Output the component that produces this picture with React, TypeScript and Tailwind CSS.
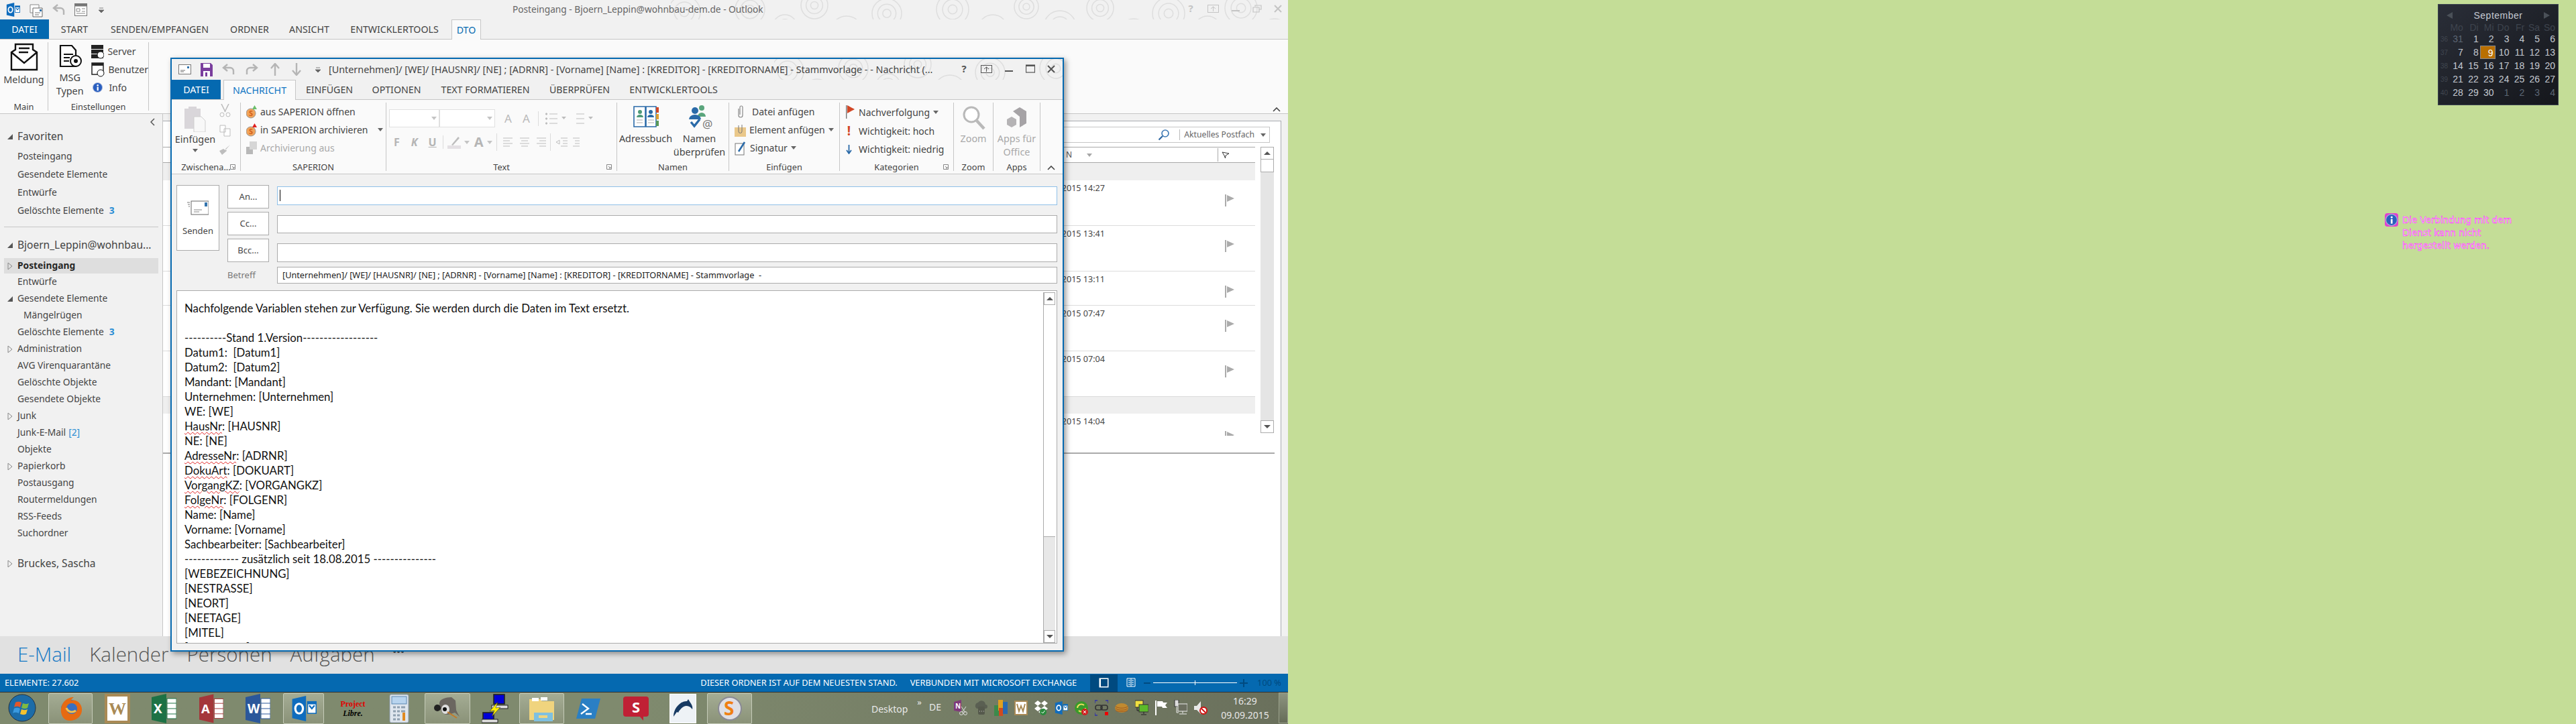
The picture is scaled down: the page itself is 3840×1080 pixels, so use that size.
import React from "react";

const seg = "font-['Noto_Sans','Open_Sans',sans-serif]";

const swirls: [number, number, number][] = [
  [20,18,24],[64,50,20],[118,14,22],[170,40,18],[214,8,20],[262,48,24],[322,20,22],[372,52,18],[420,14,24],[480,44,22],[530,10,18],[580,40,24],[640,12,20],[690,50,22],[742,20,24],[800,44,20],[850,12,24],[900,50,22],
];

function Swirls({ w, h }: { w: number; h: number }) {
  return (
    <svg width={w} height={h} viewBox={`0 0 ${w} ${h}`} className="block" fill="none" stroke="#dedede" strokeWidth="1.5">
      {swirls.filter(([x]) => x < w + 30).map(([x, y, r], i) => (
        <g key={i}>
          <circle cx={x} cy={y} r={r} />
          <circle cx={x} cy={y} r={r * 0.62} />
          <circle cx={x} cy={y} r={r * 0.28} />
        </g>
      ))}
    </svg>
  );
}

function OutlookIcon({ s = 22 }: { s?: number }) {
  return (
    <svg width={s} height={s} viewBox="0 0 24 24" className="shrink-0">
      <path d="M1 3 14 0v24L1 21z" fill="#0f6cbd" />
      <ellipse cx="7.5" cy="12" rx="3.6" ry="4.6" fill="none" stroke="#fff" strokeWidth="2" />
      <rect x="15" y="5" width="9" height="12" fill="#0f6cbd" />
      <rect x="16" y="8" width="7" height="8" fill="#fff" />
      <path d="m17 9 2.5 3L22 9" stroke="#0f6cbd" fill="none" strokeWidth="1.4" />
    </svg>
  );
}

function Flag({ c = "#ababab" }: { c?: string }) {
  return (
    <svg width="14" height="18" viewBox="0 0 14 18" className="shrink-0">
      <rect x="0" y="0" width="2" height="18" fill={c} />
      <path d="M3 1 14 6 3 11z" fill={c} />
    </svg>
  );
}

function Tri({ open }: { open?: boolean }) {
  return open ? (
    <svg width="10" height="10" viewBox="0 0 10 10" className="shrink-0"><path d="M9 1v8H1z" fill="#555" /></svg>
  ) : (
    <svg width="10" height="12" viewBox="0 0 10 12" className="shrink-0"><path d="M2 1l6 5-6 5z" fill="none" stroke="#888" /></svg>
  );
}

function Caret({ c = "#666" }: { c?: string }) {
  return <svg width="8" height="5" viewBox="0 0 8 5" className="shrink-0"><path d="M0 0h8L4 5z" fill={c} /></svg>;
}

function NavRow({ label, h = 25, indent = 26, tri, open, bold, active, badge, linkBadge, big }: { label: string; h?: number; indent?: number; tri?: boolean; open?: boolean; bold?: boolean; active?: boolean; badge?: string; linkBadge?: string; big?: boolean }) {
  return (
    <div className={`flex items-center mx-1.5 pr-1 ${active ? "bg-[#dedede]" : ""}`} style={{ height: h, paddingLeft: indent - 6 }}>
      {tri && <span className="-ml-4 w-4 flex items-center"><Tri open={open} /></span>}
      <span className={`whitespace-nowrap text-[#444] ${big ? "text-[15.5px]" : "text-[13.8px]"} ${bold ? "font-bold text-[#262626]" : ""}`}>{label}</span>
      {badge && <span className="ml-2 text-[13.8px] font-bold text-[#2a8dd4]">{badge}</span>}
      {linkBadge && <span className="ml-1 text-[13.8px] text-[#2a8dd4]">{linkBadge}</span>}
    </div>
  );
}

function Sidebar() {
  return (
    <div className={`w-[243px] shrink-0 bg-[#f1f1f1] border-r border-[#c6c6c6] pt-[21px] ${seg} relative`}>
      <svg width="8" height="12" viewBox="0 0 8 12" className="absolute left-[224px] top-[6px]"><path d="M6 1 1 6l5 5" fill="none" stroke="#555" strokeWidth="1.5" /></svg>
      <NavRow label="Favoriten" tri open big h={26} />
      <div className="h-[3px]" />
      <NavRow label="Posteingang" h={27} />
      <NavRow label="Gesendete Elemente" h={27} />
      <NavRow label="Entwürfe" h={27} />
      <NavRow label="Gelöschte Elemente" badge="3" h={27} />
      <div className="mx-1.5 mt-[10px] h-px bg-[#c6c6c6]" />
      <div className="h-[14px]" />
      <NavRow label="Bjoern_Leppin@wohnbau..." tri open big h={26} />
      <div className="h-[6px]" />
      <NavRow label="Posteingang" tri bold active h={23} />
      <NavRow label="Entwürfe" />
      <NavRow label="Gesendete Elemente" tri open />
      <NavRow label="Mängelrügen" indent={35} h={24} />
      <NavRow label="Gelöschte Elemente" badge="3" h={26} />
      <NavRow label="Administration" tri />
      <NavRow label="AVG Virenquarantäne" />
      <NavRow label="Gelöschte Objekte" />
      <NavRow label="Gesendete Objekte" />
      <NavRow label="Junk" tri />
      <NavRow label="Junk-E-Mail" linkBadge="[2]" />
      <NavRow label="Objekte" />
      <NavRow label="Papierkorb" tri />
      <NavRow label="Postausgang" />
      <NavRow label="Routermeldungen" />
      <NavRow label="RSS-Feeds" />
      <NavRow label="Suchordner" />
      <div className="h-[20px]" />
      <NavRow label="Bruckes, Sascha" tri big h={26} />
    </div>
  );
}

function MailRow({ h, date }: { h: number; date: string }) {
  return (
    <div className="relative border-b border-[#dcdcdc] flex justify-between bg-white" style={{ height: h }}>
      <div className="pl-[1243px] pt-[3px] text-[12.6px] text-[#444] w-[1404px] text-right whitespace-nowrap">{date}</div>
      <div className="pt-[21px] pr-[31px]"><Flag /></div>
    </div>
  );
}

function MailPane() {
  return (
    <div className={`flex-1 min-w-0 bg-[#f1f1f1] pt-[10px] pb-0 ${seg}`}>
      <div className="ml-0 mr-[10px] h-full bg-white border-t border-r border-[#a8abb0] relative pr-[9px] pt-[8px]">
        <div className="flex justify-end h-[24px] pr-[7px]">
          <div className="w-[320px] border border-[#c6c6c6] flex items-center text-[12.2px] text-[#666] pl-[10px] pr-[5px]">
            <div className="flex-1" />
            <svg width="18" height="18" viewBox="0 0 18 18" className="mr-[14px]"><circle cx="11" cy="7" r="5" fill="none" stroke="#3c78b4" strokeWidth="1.6" /><path d="M7 11 1.5 16.5" stroke="#2a64a0" strokeWidth="2.2" /></svg>
            <div className="w-px h-[16px] bg-[#bbb] mr-[6px]" />
            <span className="whitespace-nowrap">Aktuelles Postfach</span>
            <span className="ml-[9px]"><Caret /></span>
          </div>
        </div>
        <div className="flex mt-[6px] h-[444px] pr-[1px]">
          <div className="flex-1 min-w-0">
            <div className="h-[24px] border-t border-b border-[#a8a8a8] relative flex items-center bg-white">
              <span className="ml-[1346px] text-[12px] text-[#555]">N</span>
              <span className="ml-[22px]"><Caret c="#a6a6a6" /></span>
              <div className="flex-1" />
              <div className="w-px h-[20px] bg-[#aaa] mr-[5px]" />
              <svg width="12" height="11" viewBox="0 0 12 11" className="mr-[38px]"><path d="M1 1 11 3 6 6l-.5 4L4 6z" fill="#fff" stroke="#333" /></svg>
            </div>
            <div className="h-[26px] bg-[#efefef]" />
            <MailRow h={68} date="08.09.2015 14:27" />
            <MailRow h={68} date="08.09.2015 13:41" />
            <MailRow h={51} date="08.09.2015 13:11" />
            <MailRow h={68} date="08.09.2015 07:47" />
            <MailRow h={68} date="08.09.2015 07:04" />
            <div className="h-[25px] bg-[#efefef]" />
            <div className="relative h-[33px] bg-white overflow-hidden flex justify-between">
              <div className="pl-[1243px] pt-[3px] text-[12.6px] text-[#444] w-[1404px] text-right whitespace-nowrap">04.09.2015 14:04</div>
              <div className="pt-[26px] pr-[31px]"><Flag /></div>
            </div>
          </div>
          <div className="w-[20px] ml-[8px] shrink-0 flex flex-col bg-[#e5e5e5] h-[427px]">
            <ScrollBtn />
            <div className="h-[20px] bg-white border border-[#ababab] -mt-px" />
            <div className="flex-1" />
            <ScrollBtn down />
          </div>
        </div>
        <div className="h-[12px]" />
        <div className="border-t-2 border-[#aaaaaa]" />
      </div>
    </div>
  );
}

function ScrollBtn({ down }: { down?: boolean }) {
  return (
    <div className="h-[19px] bg-white border border-[#ababab] flex items-center justify-center shrink-0">
      <svg width="10" height="5" viewBox="0 0 10 5"><path d={down ? "M0 0h10L5 5z" : "M0 5h10L5 0z"} fill="#555" /></svg>
    </div>
  );
}

function MainRibbon() {
  return (
    <div className={`h-[111px] bg-[#fafafa] border-b border-[#c6c6c6] flex text-[#444] ${seg} relative`}>
      <div className="w-[72px] border-r border-[#c6c6c6] my-[4px] flex flex-col items-center">
        <svg width="42" height="42" viewBox="0 0 42 42" className="mt-[1px]"><path d="M2 14 8 10V2h26v8l6 4v26H2z" fill="#fff" stroke="#111" strokeWidth="2.4" /><path d="m2 14 19 16 19-16" fill="none" stroke="#111" strokeWidth="2.4" /><path d="M13 8h16M13 14h14" stroke="#111" strokeWidth="2.4" /></svg>
        <div className="text-[14.4px] mt-[3px] leading-[20px]">Meldung</div>
        <div className="flex-1" />
        <div className="text-[12.8px] leading-[18px] relative top-[3px]">Main</div>
      </div>
      <div className="w-[150px] border-r border-[#c6c6c6] my-[4px] flex flex-col">
        <div className="flex flex-1">
          <div className="w-[72px] flex flex-col items-center">
            <svg width="36" height="36" viewBox="0 0 36 36" className="mt-[3px]"><path d="M4 2h17l6 7v24H4z" fill="#fff" stroke="#111" strokeWidth="2.2" /><path d="M9 15h14M9 20h9M9 25h8" stroke="#111" strokeWidth="2" /><circle cx="27" cy="25" r="8" fill="#fff" stroke="#111" strokeWidth="2" /><circle cx="27" cy="25" r="3" fill="#111" /></svg>
            <div className="text-[14.4px] text-center leading-[20px] mt-[4px]">MSG<br />Typen</div>
          </div>
          <div className="flex flex-col text-[14px]">
            <div className="flex items-center h-[27px] gap-[5px]">
              <svg width="19" height="22" viewBox="0 0 19 22"><rect x="0" y="1" width="18" height="6" fill="#222" /><rect x="0" y="8" width="18" height="6" fill="#222" /><rect x="0" y="15" width="18" height="6" fill="#222" /><circle cx="14" cy="16" r="5" fill="#fff" stroke="#111" /></svg>
              <span>Server</span>
            </div>
            <div className="flex items-center h-[27px] gap-[5px]">
              <svg width="20" height="22" viewBox="0 0 20 22"><rect x="1" y="1" width="17" height="17" fill="#fff" stroke="#222" strokeWidth="1.5" /><rect x="1" y="1" width="17" height="4" fill="#222" /><circle cx="14" cy="16" r="5" fill="#fff" stroke="#111" /></svg>
              <span>Benutzer</span>
            </div>
            <div className="flex items-center h-[27px] gap-[9px] pl-[2px]">
              <InfoDot s={15} />
              <span>Info</span>
            </div>
          </div>
        </div>
        <div className="text-[12.8px] leading-[18px] text-center relative top-[3px]">Einstellungen</div>
      </div>
      <div className="flex-1" />
      <svg width="12" height="7" viewBox="0 0 12 7" className="absolute right-[11px] top-[101px]"><path d="M1 6l5-5 5 5" fill="none" stroke="#444" strokeWidth="1.6" /></svg>
    </div>
  );
}

function InfoDot({ s = 16 }: { s?: number }) {
  return (
    <svg width={s} height={s} viewBox="0 0 16 16" className="shrink-0">
      <circle cx="8" cy="8" r="7.5" fill="#2a5fc0" stroke="#aab8d8" />
      <rect x="7" y="7" width="2.4" height="6" fill="#fff" />
      <circle cx="8.2" cy="4.5" r="1.4" fill="#fff" />
    </svg>
  );
}

function Tab({ w, children, className = "" }: { w: number; children: React.ReactNode; className?: string }) {
  return <div className={`flex items-center justify-center whitespace-nowrap shrink-0 ${className}`} style={{ width: w }}>{children}</div>;
}

function WinButtons({ dim }: { dim?: boolean }) {
  const c = dim ? "#c4c4c4" : "#555";
  return (
    <div className="flex items-center gap-[17px]" style={{ color: c }}>
      <span className="text-[15px] font-bold leading-none w-[16px] text-center">?</span>
      <svg width="17" height="12" viewBox="0 0 17 12"><rect x=".5" y=".5" width="16" height="11" fill="none" stroke={c} /><path d="M8.5 10V3M5 6l3.5-3L12 6" stroke={c} fill="none" /></svg>
      <svg width="16" height="12" viewBox="0 0 16 12"><rect x="2" y="8" width="12" height="2" fill={c} /></svg>
      {dim ? (
        <svg width="14" height="12" viewBox="0 0 14 12"><path d="M4 3V1h9v6h-3M1 4h9v7H1z" fill="none" stroke={c} strokeWidth="1.2" /></svg>
      ) : (
        <svg width="14" height="13" viewBox="0 0 14 13"><rect x=".5" y="1" width="13" height="11" fill="none" stroke={c} strokeWidth="1.2" /><rect x=".5" y="1" width="13" height="2" fill={c} /></svg>
      )}
      <svg width="14" height="14" viewBox="0 0 14 14"><path d="M2 2l10 10M12 2 2 12" stroke={c} strokeWidth="2" /></svg>
    </div>
  );
}

function MainWindow() {
  return (
    <div className="w-[1920px] shrink-0 h-[1032px] flex flex-col bg-[#f1f1f1]">
      <div className={`h-[29px] relative overflow-hidden flex items-center ${seg}`}>
        <div className="pl-[9px] flex items-center gap-[14px] shrink-0">
          <OutlookIcon s={21} />
          <svg width="20" height="22" viewBox="0 0 20 22"><path d="M1 3h13v12H1z" fill="#fff" stroke="#888" /><path d="M5 8h14v13H5z" fill="#fff" stroke="#666" /><path d="M8 15h8M8 18h6" stroke="#777" /><rect x="15" y="10" width="3" height="3" fill="#3374ad" /></svg>
          <svg width="19" height="17" viewBox="0 0 19 17"><path d="M8 1 2 6l6 5M3 6h9a5 5 0 0 1 5 5v5" fill="none" stroke="#b5b5b5" strokeWidth="2.4" /></svg>
          <svg width="19" height="19" viewBox="0 0 19 19"><rect x=".5" y=".5" width="18" height="18" fill="#fff" stroke="#777" /><rect x=".5" y=".5" width="18" height="4" fill="#777" /><path d="M3 8h5v4H3zM11 8h5M11 12h5M3 15h13" stroke="#888" fill="none" /></svg>
          <svg width="8" height="8" viewBox="0 0 8 8" className="ml-[3px]"><path d="M1 1h6M0 4h8L4 8z" stroke="#666" fill="#666" strokeWidth=".8" /></svg>
        </div>
        <div className="absolute left-[764px] top-[4px] text-[13.7px] text-[#666] whitespace-nowrap z-10">Posteingang - Bjoern_Leppin@wohnbau-dem.de - Outlook</div>
        <div className="absolute right-0 top-0 w-[920px] h-[59px] overflow-hidden"><Swirls w={920} h={59} /></div>
        <div className="absolute right-[8px] top-[5px]"><WinButtons dim /></div>
      </div>
      <div className={`h-[30px] border-b border-[#c6c6c6] flex items-stretch text-[14.2px] text-[#444] ${seg} relative z-10`}>
        <Tab w={73} className="bg-[#0569b0] text-white">DATEI</Tab>
        <Tab w={76}>START</Tab>
        <Tab w={178}>SENDEN/EMPFANGEN</Tab>
        <Tab w={90}>ORDNER</Tab>
        <Tab w={88}>ANSICHT</Tab>
        <Tab w={166}>ENTWICKLERTOOLS</Tab>
        <Tab w={44} className="ml-[2px] bg-[#fafafa] border border-b-0 border-[#c6c6c6] text-[#0569b0] h-[30px]">DTO</Tab>
      </div>
      <MainRibbon />
      <div className="flex flex-1 min-h-0 overflow-hidden">
        <Sidebar />
        <MailPane />
      </div>
      <div className="h-[56px] bg-[#e1e1e1] flex items-center pl-[26px] pb-[2px] text-[#555] text-[29.5px] font-light font-['Open_Sans',sans-serif] shrink-0 leading-none gap-[27px]">
        <span className="text-[#1377c4]">E-Mail</span>
        <span>Kalender</span>
        <span>Personen</span>
        <span>Aufgaben</span>
        <span className="text-[#555] text-[13px] font-bold tracking-[1px] -mt-[8px]">•••</span>
      </div>
      <div className={`h-[27px] bg-[#0569b0] flex items-center text-white text-[12.8px] shrink-0 ${seg}`}>
        <span className="ml-[7px]">ELEMENTE: 27.602</span>
        <div className="flex-1" />
        <span>DIESER ORDNER IST AUF DEM NEUESTEN STAND.</span>
        <span className="ml-[19px]">VERBUNDEN MIT MICROSOFT EXCHANGE</span>
        <div className="ml-[20px] w-[41px] h-[26px] bg-[#004a80] flex items-center justify-center">
          <svg width="15" height="15" viewBox="0 0 15 15"><rect x=".5" y=".5" width="14" height="14" fill="#fff" /><rect x="3" y="2" width="10" height="11" fill="#004a80" /></svg>
        </div>
        <svg width="14" height="15" viewBox="0 0 14 15" className="ml-[13px]"><path d="M1 1h12v12H1zM7 1v12M3 4h3M3 7h3M3 10h3M8 4h3M8 7h3M8 10h3" stroke="#fff" fill="none" /></svg>
        <span className="ml-[12px] w-[10px] h-[2px] bg-[#004a80]" />
        <div className="ml-[4px] w-[125px] h-px bg-white flex justify-center items-center"><span className="w-px h-[7px] bg-white" /></div>
        <svg width="12" height="12" viewBox="0 0 12 12" className="ml-[4px]"><path d="M0 6h12M6 0v12" stroke="#004a80" strokeWidth="2" /></svg>
        <span className="ml-[14px] mr-[10px] text-[#004a80]">100 %</span>
      </div>
    </div>
  );
}

function ComposeField({ focus, children }: { focus?: boolean; children?: React.ReactNode }) {
  return (
    <div className={`flex-1 h-[25px] bg-white border flex items-center ${focus ? "border-[#8fc0e8]" : "border-[#ababab]"}`}>{children}</div>
  );
}

function AddrBtn({ label }: { label: string }) {
  return <div className="w-[62px] h-[35px] bg-white border border-[#ababab] flex items-center justify-center text-[13px] text-[#444] shrink-0">{label}</div>;
}

function Group({ w, label, children, launcher }: { w: number; label: string; children: React.ReactNode; launcher?: boolean }) {
  return (
    <div className="border-r border-[#c6c6c6] my-[4px] flex flex-col shrink-0 relative" style={{ width: w }}>
      <div className="flex-1 flex min-h-0">{children}</div>
      <div className="h-[18px] text-center text-[12.8px] leading-[18px] text-[#444] whitespace-nowrap relative top-[3px]">{label}</div>
      {launcher && <svg width="8" height="8" viewBox="0 0 8 8" className="absolute right-[7px] bottom-[2px]"><path d="M.5.5h7v7h-7zM3 3l3 3M4 6h2V4" fill="none" stroke="#888" /></svg>}
    </div>
  );
}

function SapRow({ tip, children }: { tip: string; children: React.ReactNode }) {
  return (
    <div className="flex items-center h-[27px] gap-[5px]">
      <svg width="16" height="20" viewBox="0 0 16 20" className="shrink-0">
        <circle cx="7" cy="12" r="7" fill="#f2a45a" stroke="#999" />
        <text x="4" y="16" fontSize="11" fontWeight="bold" fill="#d2601a" fontFamily="Noto Sans">S</text>
        <path d="M9 6h7L12.5 0z" fill={tip} />
      </svg>
      {children}
    </div>
  );
}

function ComposeRibbon() {
  const g = "#bdbdbd";
  return (
    <div className={`h-[111px] bg-[#fafafa] border-b border-[#c6c6c6] flex text-[#444] ${seg} relative shrink-0`}>
      <Group w={103} label="Zwischena..." launcher>
        <div className="w-[70px] flex flex-col items-center pt-[4px]">
          <svg width="34" height="40" viewBox="0 0 34 40"><path d="M1 5h6V2h12v3h6v30H1z" fill="#d9d6da" /><path d="M15 17h11l6 6v17H15z" fill="#f8f8f8" stroke="#cfcfcf" /></svg>
          <div className="text-[14.4px] leading-[20px] mt-[1px]">Einfügen</div>
          <div className="mt-[4px]"><Caret /></div>
        </div>
        <div className="flex flex-col items-center gap-[11px] pt-[2px]">
          <svg width="17" height="20" viewBox="0 0 17 20"><path d="M3 0l6 12M14 0 8 12" stroke={g} strokeWidth="1.6" /><circle cx="4" cy="16" r="3" fill="none" stroke={g} /><circle cx="13" cy="16" r="3" fill="none" stroke={g} /></svg>
          <svg width="17" height="18" viewBox="0 0 17 18"><path d="M1 1h8v10H1zM7 6h9v11H7z" fill="#fff" stroke={g} /></svg>
          <svg width="18" height="17" viewBox="0 0 18 17"><path d="M17 1l-7 6 2 3-7 6-4-6 6-3 3 2z" fill={g} /></svg>
        </div>
      </Group>
      <Group w={217} label="SAPERION">
        <div className="flex flex-col pl-[8px] text-[14px] whitespace-nowrap">
          <SapRow tip="#6bbf6b"><span>aus SAPERION öffnen</span></SapRow>
          <SapRow tip="#e02020"><span>in SAPERION archivieren</span><span className="ml-[10px]"><Caret /></span></SapRow>
          <div className="flex items-center h-[27px] gap-[5px] text-[#a9a9a9]">
            <svg width="16" height="19" viewBox="0 0 16 19"><rect x="0" y="8" width="10" height="11" fill="#b8b8b8" /><rect x="5" y="0" width="11" height="12" fill="#d6d6d6" /></svg>
            <span>Archivierung aus</span>
          </div>
        </div>
      </Group>
      <Group w={344} label="Text" launcher>
        <div className="pl-[4px] pt-[10px] w-full">
          <div className="flex items-center gap-[8px]">
            <div className="w-[75px] h-[27px] bg-white border border-[#e0e0e0] flex items-center justify-end pr-[3px]"><Caret c="#c4c4c4" /></div>
            <div className="w-[83px] h-[27px] -ml-[8px] bg-white border border-[#e0e0e0] flex items-center justify-end pr-[3px]"><Caret c="#c4c4c4" /></div>
            <span className="text-[17px] text-[#b9b9b9] ml-[6px] leading-none">A</span>
            <span className="text-[17px] text-[#b9b9b9] ml-[8px] leading-none">A</span>
            <span className="w-px h-[22px] bg-[#dcdcdc] ml-[4px]" />
            <svg width="32" height="18" viewBox="0 0 32 18" className="ml-[2px]" stroke={g} fill={g}><path d="M6 2h12M6 9h12M6 16h12" /><circle cx="1.5" cy="2" r="1.2" /><circle cx="1.5" cy="9" r="1.2" /><circle cx="1.5" cy="16" r="1.2" /><path d="M24 6h7l-3.5 4z" stroke="none" /></svg>
            <svg width="32" height="18" viewBox="0 0 32 18" stroke={g} fill={g}><path d="M6 2h12M6 9h12M6 16h12" /><path d="M24 6h7l-3.5 4z" stroke="none" /></svg>
          </div>
          <div className="flex items-center mt-[9px] text-[#b5b5b5] font-bold text-[16px] leading-none">
            <span className="ml-[7px]">F</span>
            <span className="ml-[17px] italic">K</span>
            <span className="ml-[16px] underline">U</span>
            <span className="w-px h-[20px] bg-[#dcdcdc] ml-[9px]" />
            <svg width="22" height="20" viewBox="0 0 22 20" className="ml-[6px]"><path d="M6 14 16 2l2 2L8 15z" fill={g} /><rect x="0" y="15" width="20" height="5" fill="#e4e0e4" /></svg>
            <span className="ml-[3px]"><Caret c="#c4c4c4" /></span>
            <span className="ml-[7px] text-[20px]">A</span>
            <span className="ml-[5px]"><Caret c="#c4c4c4" /></span>
            <span className="w-px h-[26px] bg-[#dcdcdc] ml-[6px]" />
            <svg width="72" height="14" viewBox="0 0 72 14" stroke={g} className="ml-[9px]"><path d="M0 1h14M0 5h10M0 9h14M0 13h10M25 1h14M27 5h10M25 9h14M27 13h10M50 1h14M54 5h10M50 9h14M54 13h10" /></svg>
            <span className="w-px h-[26px] bg-[#dcdcdc] ml-[-2px]" />
            <svg width="44" height="14" viewBox="0 0 44 14" stroke={g} className="ml-[8px]" fill="none"><path d="M7 1h10M10 5h7M10 9h7M7 13h10M0 7l5-3v6zM25 1h10M28 5h7M28 9h7M25 13h10" /></svg>
          </div>
        </div>
      </Group>
      <Group w={167} label="Namen">
        <div className="flex w-full">
          <div className="w-[85px] flex flex-col items-center pt-[5px]">
            <svg width="38" height="33" viewBox="0 0 38 33"><path d="M1 1h17v30H1zM19 1h15v30H19z" fill="#fff" stroke="#2a6aa8" strokeWidth="1.6" /><rect x="34" y="2" width="4" height="8" fill="#d24726" /><rect x="34" y="12" width="4" height="8" fill="#e0a030" /><rect x="34" y="22" width="4" height="8" fill="#5a9a5a" /><circle cx="10" cy="9" r="3" fill="#4e9a78" /><path d="M5 17a5 4 0 0 1 10 0z" fill="#4e9a78" /><circle cx="26" cy="9" r="3" fill="#2a6aa8" /><path d="M21 17a5 4 0 0 1 10 0z" fill="#2a6aa8" /><path d="M5 21h9M5 25h9M22 21h9M22 25h9" stroke="#aaa" /></svg>
            <div className="text-[14.4px] leading-[20px] mt-[6px]">Adressbuch</div>
          </div>
          <div className="flex flex-col items-center pt-[3px] w-[75px]">
            <svg width="38" height="38" viewBox="0 0 38 38"><circle cx="22" cy="5" r="4" fill="#5aa57c" /><path d="M16 18a6 6 0 0 1 12 0z" fill="#5aa57c" /><circle cx="12" cy="9" r="5" fill="#2a6aa8" /><path d="M3 22a9 7 0 0 1 18 0z" fill="#2a6aa8" /><path d="M6 26l5 6 8-10" stroke="#2a6aa8" strokeWidth="3.4" fill="none" /><text x="23" y="35" fontSize="17" fill="#777" fontFamily="Noto Sans">@</text></svg>
            <div className="text-[14.4px] leading-[20px] text-center mt-[3px]">Namen<br />überprüfen</div>
          </div>
        </div>
      </Group>
      <Group w={165} label="Einfügen">
        <div className="flex flex-col pl-[8px] text-[14px] whitespace-nowrap">
          <div className="flex items-center h-[27px] gap-[11px]">
            <svg width="12" height="21" viewBox="0 0 12 21" className="ml-[3px]"><path d="M3 6v10a3 3 0 0 0 6 0V4a2 2 0 0 0-4 0v11" fill="none" stroke="#888" strokeWidth="1.2" /></svg>
            <span>Datei anfügen</span>
          </div>
          <div className="flex items-center h-[27px] gap-[5px]">
            <svg width="17" height="20" viewBox="0 0 17 20"><rect x="0" y="6" width="17" height="14" fill="#eac88a" /><path d="M6 3v9a2.5 2.5 0 0 0 5 0V2" fill="none" stroke="#777" /></svg>
            <span>Element anfügen</span><Caret />
          </div>
          <div className="flex items-center h-[27px] gap-[5px]">
            <svg width="18" height="22" viewBox="0 0 18 22"><rect x="1" y="4" width="13" height="17" fill="#fff" stroke="#777" /><path d="M6 16 15 2" stroke="#2a6aa8" strokeWidth="2.6" /></svg>
            <span>Signatur</span><Caret />
          </div>
        </div>
      </Group>
      <Group w={170} label="Kategorien" launcher>
        <div className="flex flex-col pl-[9px] text-[14px] whitespace-nowrap">
          <div className="flex items-center h-[28px] gap-[5px]">
            <svg width="14" height="20" viewBox="0 0 14 20"><rect x="0" y="0" width="1.4" height="20" fill="#777" /><path d="M2 0l11 6-11 6z" fill="#d24726" /></svg>
            <span>Nachverfolgung</span><Caret />
          </div>
          <div className="flex items-center h-[28px] gap-[10px]">
            <span className="w-[9px] text-center text-[#d24726] font-bold text-[19px] leading-none">!</span>
            <span>Wichtigkeit: hoch</span>
          </div>
          <div className="flex items-center h-[27px] gap-[10px]">
            <svg width="9" height="14" viewBox="0 0 9 14"><path d="M4.5 0v12M1 8l3.5 5L8 8" stroke="#2a6aa8" strokeWidth="1.8" fill="none" /></svg>
            <span>Wichtigkeit: niedrig</span>
          </div>
        </div>
      </Group>
      <Group w={59} label="Zoom">
        <div className="w-full flex flex-col items-center pt-[5px] text-[#a9a9a9]">
          <svg width="35" height="36" viewBox="0 0 35 36"><circle cx="14" cy="13" r="11" fill="#fff" stroke="#b9b9b9" strokeWidth="3" /><path d="M22 22l11 12" stroke="#b9b9b9" strokeWidth="4.5" /></svg>
          <div className="text-[14.4px] leading-[20px] mt-[3px]">Zoom</div>
        </div>
      </Group>
      <Group w={70} label="Apps">
        <div className="w-full flex flex-col items-center pt-[5px] text-[#a9a9a9]">
          <svg width="32" height="36" viewBox="0 0 32 36"><path d="M10 8 20 2l10 6v18l-10 6V16z" fill="#a6a3a6" /><path d="M1 20l7-4 7 4v8l-7 4-7-4z" fill="#b5b3b5" /></svg>
          <div className="text-[14.4px] leading-[20px] text-center mt-[3px]">Apps für<br />Office</div>
        </div>
      </Group>
      <svg width="12" height="7" viewBox="0 0 12 7" className="absolute right-[11px] top-[98px]"><path d="M1 6l5-5 5 5" fill="none" stroke="#444" strokeWidth="1.6" /></svg>
    </div>
  );
}

const bodyLines: { err?: string; b?: string }[] = [
  { b: "----------Stand 1.Version------------------" },
  { b: "Datum1:  [Datum1]" },
  { b: "Datum2:  [Datum2]" },
  { b: "Mandant: [Mandant]" },
  { b: "Unternehmen: [Unternehmen]" },
  { b: "WE: [WE]" },
  { err: "HausNr", b: ": [HAUSNR]" },
  { b: "NE: [NE]" },
  { err: "AdresseNr", b: ": [ADRNR]" },
  { err: "DokuArt", b: ": [DOKUART]" },
  { err: "VorgangKZ", b: ": [VORGANGKZ]" },
  { err: "FolgeNr", b: ": [FOLGENR]" },
  { b: "Name: [Name]" },
  { b: "Vorname: [Vorname]" },
  { b: "Sachbearbeiter: [Sachbearbeiter]" },
  { b: "------------- zusätzlich seit 18.08.2015 ---------------" },
  { b: "[WEBEZEICHNUNG]" },
  { b: "[NESTRASSE]" },
  { b: "[NEORT]" },
  { b: "[NEETAGE]" },
  { b: "[MITEL]" },
  { b: "[MIANREDE]" },
];

function ComposeWindow() {
  const g = "#b5b5b5";
  return (
    <div className={`absolute left-[254px] top-[86px] w-[1332px] h-[886px] bg-[#f1f1f1] border-2 border-[#0569b0] shadow-[3px_3px_8px_rgba(0,0,0,0.4)] flex flex-col overflow-hidden ${seg}`}>
      <div className="h-[31px] relative flex items-center shrink-0 overflow-hidden">
        <div className="flex items-center pl-[10px] gap-[14px] shrink-0">
          <svg width="19" height="15" viewBox="0 0 19 15"><rect x=".5" y=".5" width="18" height="14" fill="#fff" stroke="#777" /><path d="M3 9h7M3 11h5" stroke="#777" /><rect x="13" y="3" width="3" height="3" fill="#3374ad" /></svg>
          <svg width="18" height="20" viewBox="0 0 18 20"><path d="M0 0h15l3 3v17H0z" fill="#7a3e9d" /><rect x="4" y="1" width="10" height="6" fill="#fff" /><rect x="4" y="12" width="10" height="8" fill="#fff" /><rect x="7" y="14" width="3" height="6" fill="#7a3e9d" /></svg>
          <svg width="20" height="17" viewBox="0 0 20 17"><path d="M8 1 2 6l6 5M3 6h9a5 5 0 0 1 5 5v5" fill="none" stroke={g} strokeWidth="2.4" /></svg>
          <svg width="20" height="17" viewBox="0 0 20 17"><path d="M12 1l6 5-6 5M17 6H8a5 5 0 0 0-5 5v5" fill="none" stroke={g} strokeWidth="2.4" /></svg>
          <svg width="14" height="19" viewBox="0 0 14 19" className="ml-[4px]"><path d="M1 8l6-7 6 7M7 2v17" fill="none" stroke={g} strokeWidth="2.4" /></svg>
          <svg width="14" height="19" viewBox="0 0 14 19" className="ml-[4px]"><path d="M1 11l6 7 6-7M7 17V0" fill="none" stroke={g} strokeWidth="2.4" /></svg>
          <svg width="8" height="8" viewBox="0 0 8 8" className="ml-[7px]"><path d="M1 1h6M0 4h8L4 8z" stroke="#666" fill="#666" strokeWidth=".8" /></svg>
        </div>
        <div className="ml-[12px] text-[14.35px] text-[#444] whitespace-nowrap z-10">[Unternehmen]/ [WE]/ [HAUSNR]/ [NE] ; [ADRNR] - [Vorname] [Name] : [KREDITOR] - [KREDITORNAME] - Stammvorlage  - - Nachricht (...</div>
        <div className="absolute right-0 top-0 w-[430px] h-[60px] overflow-hidden"><Swirls w={430} h={60} /></div>
        <div className="absolute right-[10px] top-[7px]"><WinButtons /></div>
      </div>
      <div className="h-[30px] border-b border-[#c6c6c6] flex items-stretch text-[14.2px] text-[#444] shrink-0 relative z-10">
        <Tab w={73} className="bg-[#0569b0] text-white">DATEI</Tab>
        <Tab w={108} className="ml-[4px] bg-[#fafafa] border border-b-0 border-[#c6c6c6] text-[#1377c4] h-[30px]">NACHRICHT</Tab>
        <Tab w={100}>EINFÜGEN</Tab>
        <Tab w={100}>OPTIONEN</Tab>
        <Tab w={165}>TEXT FORMATIEREN</Tab>
        <Tab w={116}>ÜBERPRÜFEN</Tab>
        <Tab w={164}>ENTWICKLERTOOLS</Tab>
      </div>
      <ComposeRibbon />
      <div className="flex pl-[7px] pr-[8px] pt-[16px] shrink-0">
        <div className="w-[64px] h-[98px] bg-white border border-[#ababab] flex flex-col items-center justify-center shrink-0 text-[13px] text-[#444] pt-[4px]">
          <svg width="32" height="22" viewBox="0 0 32 22"><rect x="6" y="1" width="26" height="20" fill="#fff" stroke="#666" /><path d="M10 14h12M10 17h8" stroke="#888" /><rect x="26" y="3" width="4" height="6" fill="#3374ad" /><path d="M0 3h4M1 6h3M2 9h2" stroke="#777" /></svg>
          <div className="mt-[14px]">Senden</div>
        </div>
        <div className="ml-[12px] flex flex-col gap-[5px] w-[62px] shrink-0">
          <AddrBtn label="An..." />
          <AddrBtn label="Cc..." />
          <AddrBtn label="Bcc..." />
        </div>
        <div className="ml-[12px] flex-1 flex flex-col pt-[2px] gap-[15px]">
          <ComposeField focus><span className="ml-[3px] w-px h-[17px] bg-black" /></ComposeField>
          <ComposeField />
          <ComposeField />
        </div>
      </div>
      <div className="flex pl-[7px] pr-[8px] mt-[7px] h-[25px] items-center shrink-0">
        <div className="w-[150px] pl-[76px] text-[13px] text-[#777] shrink-0">Betreff</div>
        <div className="flex-1 h-[25px] bg-white border border-[#ababab] flex items-center pl-[7px] text-[12.7px] text-[#222] whitespace-nowrap">
          [Unternehmen]/ [WE]/ [HAUSNR]/ [NE] ; [ADRNR] - [Vorname] [Name] : [KREDITOR] - [KREDITORNAME] - Stammvorlage&nbsp; -
        </div>
      </div>
      <div className="ml-[7px] mr-[8px] mt-[10px] h-[527px] bg-white border border-[#ababab] flex overflow-hidden shrink-0">
        <div className="flex-1 min-w-0 pl-[11px] pt-[15px] font-['Lato',sans-serif] text-[16.8px] leading-[22px] text-[#111] whitespace-pre overflow-hidden">
          <div>Nachfolgende Variablen stehen zur Verfügung. Sie werden durch die Daten im Text ersetzt.</div>
          <div className="h-[22px]" />
          {bodyLines.map((l, i) => (
            <div key={i}>
              {l.err && <span className="underline decoration-wavy decoration-[#e02020] decoration-1 underline-offset-2">{l.err}</span>}
              {l.b}
            </div>
          ))}
        </div>
        <div className="w-[18px] shrink-0 flex flex-col border-l border-[#ababab] mr-[2px] mt-[2px]">
          <ScrollBtn />
          <div className="h-[346px] bg-white border-b border-[#ababab]" />
          <div className="flex-1 bg-[#e8e8e8]" />
          <ScrollBtn down />
        </div>
      </div>
    </div>
  );
}

function TaskBtn({ w, active, children, className = "" }: { w: number; active?: boolean; children?: React.ReactNode; className?: string }) {
  return (
    <div className={`h-[46px] mt-[1px] flex items-center justify-center shrink-0 rounded-[2px] ${active ? "border border-[#c5cbb8] bg-gradient-to-b from-[#a4ac94] to-[#8a9278]" : ""} ${className}`} style={{ width: w }}>{children}</div>
  );
}

function Gap({ w }: { w: number }) {
  return <div className="shrink-0" style={{ width: w }} />;
}

function OfficeTile({ c, letter }: { c: string; letter: string }) {
  return (
    <svg width="37" height="44" viewBox="0 0 37 44">
      <path d="M0 5 22 0v44L0 39z" fill={c} />
      <rect x="23" y="7" width="14" height="30" fill="#fff" stroke={c} />
      <path d="M23 14h14M23 22h14M23 30h14" stroke={c} />
      <text x="3" y="29" fontSize="19" fontWeight="bold" fill="#fff" fontFamily="Noto Sans">{letter}</text>
    </svg>
  );
}

function TrayIcons() {
  return (
    <div className="ml-[19px] flex items-center gap-[10px]">
      <svg width="20" height="24" viewBox="0 0 20 24"><path d="M0 3 11 0v18L0 16z" fill="#80397b" /><text x="2" y="13" fontSize="10" fontWeight="bold" fill="#fff" fontFamily="Noto Sans">N</text><path d="M11 10l6 9M18 10l-6 9" stroke="#ddd" /><circle cx="11" cy="20" r="2.5" fill="none" stroke="#ddd" /><circle cx="17" cy="20" r="2.5" fill="none" stroke="#ddd" /></svg>
      <svg width="20" height="24" viewBox="0 0 20 24"><path d="M4 13a5 5 0 0 1 2-9 6 6 0 0 1 11 3 3 3 0 0 1 0 6z" fill="#5a5f52" /><rect x="6" y="10" width="10" height="12" rx="2" fill="#55594c" /><path d="M8 17h1M11 17h1M14 17h1" stroke="#ccc" /></svg>
      <svg width="20" height="24" viewBox="0 0 20 24"><rect x="0" y="8" width="7" height="16" fill="#3c8a4a" /><rect x="6" y="0" width="7" height="16" fill="#e0a020" /><rect x="7" y="12" width="6" height="12" fill="#d04a20" /><rect x="13" y="3" width="7" height="18" fill="#2a6ab0" /></svg>
      <svg width="20" height="24" viewBox="0 0 20 24"><rect x="1" y="2" width="18" height="20" fill="#fff" stroke="#a98a55" strokeWidth="2" /><path d="M4 6l3 11 3-8 3 8 3-11" fill="none" stroke="#a98a55" strokeWidth="2" /></svg>
      <svg width="20" height="24" viewBox="0 0 20 24"><path d="M5 1l5 4-5 4-5-4zM15 1l5 4-5 4-5-4zM5 9l5 4-5 4-5-4zM15 9l5 4-5 4-5-4zM10 15l4 3-4 3-4-3z" fill="#fff" /><circle cx="13" cy="18" r="5" fill="#2a8a3c" /><path d="M10.5 18l2 2 3-4" stroke="#fff" fill="none" /></svg>
      <OutlookIcon s={20} />
      <svg width="20" height="24" viewBox="0 0 20 24"><circle cx="10" cy="12" r="10" fill="#3a9a2a" /><path d="M4 12a6 6 0 0 1 10-4M16 12a6 6 0 0 1-10 4" fill="none" stroke="#f0e060" strokeWidth="2" /><circle cx="15" cy="18" r="5" fill="#d02020" /><path d="M13 16l4 4M17 16l-4 4" stroke="#fff" /></svg>
      <svg width="20" height="24" viewBox="0 0 20 24"><path d="M0 5V1h4M16 1h4v4M0 19v4h4" fill="none" stroke="#1010d0" /><rect x="15" y="18" width="5" height="5" fill="#f00000" /><rect x="1" y="8" width="10" height="7" rx="3" fill="none" stroke="#333" strokeWidth="1.6" /><rect x="9" y="8" width="10" height="7" rx="3" fill="none" stroke="#333" strokeWidth="1.6" /></svg>
      <svg width="20" height="24" viewBox="0 0 20 24"><ellipse cx="10" cy="12" rx="10" ry="7" fill="#c08a30" /><path d="M1 10c5 3 13 3 18 0M1 13c5 3 13 3 18 0M1 16c5 2 13 2 18 0" stroke="#a05a20" fill="none" /></svg>
      <svg width="20" height="24" viewBox="0 0 20 24"><rect x="0" y="1" width="12" height="10" fill="#f0e040" stroke="#333" /><rect x="6" y="7" width="14" height="11" fill="#5cba2a" stroke="#333" /><path d="M13 18v3M9 22h8M3 11v5h3" stroke="#222" fill="none" /></svg>
      <svg width="18" height="24" viewBox="0 0 18 24"><rect x="0" y="1" width="2" height="22" fill="#fff" /><path d="M3 2h8l1 2h6l-3 4 3 4h-7l-1-2H3z" fill="#fff" /></svg>
      <svg width="20" height="24" viewBox="0 0 20 24"><rect x="1" y="0" width="6" height="10" fill="#ddd" stroke="#333" /><rect x="6" y="6" width="14" height="11" fill="#6c6f60" stroke="#eee" /><path d="M13 17v3M8 21h11M4 10v9h3" stroke="#eee" fill="none" /></svg>
      <svg width="20" height="24" viewBox="0 0 20 24"><path d="M0 9h4l6-7v19l-6-6H0z" fill="#e8e8e8" /><circle cx="14" cy="16" r="5" fill="#fff" stroke="#d01010" strokeWidth="2" /><path d="M11 13l6 6" stroke="#d01010" strokeWidth="2" /></svg>
    </div>
  );
}

function Taskbar() {
  return (
    <div className={`absolute left-0 top-[1032px] w-[1920px] h-[48px] flex items-start border-t border-[#303030] bg-gradient-to-r from-[#7f8a6e] via-[#7f8a6e] to-[#6a705c] ${seg}`}>
      <div className="w-[66px] h-[46px] flex items-center justify-center shrink-0 mr-[6px]">
        <svg width="44" height="42" viewBox="0 0 44 42"><circle cx="22" cy="21" r="20" fill="#1c6ca8" stroke="#234" /><path d="M12 13c4-2 6-1 9 0l-2 7c-3-1-5-2-9 0z" fill="#e2572a" /><path d="M23 14c3 1 5 2 9 0l-2 7c-4 2-6 1-9 0z" fill="#7fba42" /><path d="M10 22c4-2 6-1 9 0l-2 7c-3-1-5-2-9 0z" fill="#3a9ae0" /><path d="M21 23c3 1 5 2 9 0l-2 7c-4 2-6 1-9 0z" fill="#f5c22e" /></svg>
      </div>
      <TaskBtn w={66} active>
        <svg width="38" height="38" viewBox="0 0 38 38"><circle cx="19" cy="20" r="14" fill="#3169b5" /><path d="M5 24C4 10 14 2 24 2c-3 2-4 4-4 5 8-2 15 4 16 12 1 11-8 18-18 18C10 37 6 31 5 24z" fill="#e66a12" /><circle cx="21" cy="19" r="8" fill="#3a6fc0" /><path d="M13 18c2 6 9 8 14 4" stroke="#f6c24a" strokeWidth="3" fill="none" /></svg>
      </TaskBtn>
      <Gap w={17} />
      <TaskBtn w={40}><div className="w-[38px] h-[44px] bg-white border-[4px] border-[#a98a55] flex items-center justify-center text-[#a98a55] text-[26px] font-bold font-['Liberation_Serif',serif]">W</div></TaskBtn>
      <Gap w={31} />
      <TaskBtn w={37}><OfficeTile c="#1d7245" letter="X" /></TaskBtn>
      <Gap w={34} />
      <TaskBtn w={36}><OfficeTile c="#a4373a" letter="A" /></TaskBtn>
      <Gap w={33} />
      <TaskBtn w={37}><OfficeTile c="#2b579a" letter="W" /></TaskBtn>
      <Gap w={19} />
      <TaskBtn w={61} active><OutlookIcon s={38} /></TaskBtn>
      <Gap w={21} />
      <TaskBtn w={44}>
        <div className="leading-[14px] text-center font-bold font-['Liberation_Serif',serif] text-[12px]"><div className="text-[#e00000]">Project</div><div className="italic text-black">Libre.</div></div>
      </TaskBtn>
      <Gap w={31} />
      <TaskBtn w={32}>
        <svg width="30" height="44" viewBox="0 0 30 44"><rect x="1" y="1" width="28" height="42" rx="2" fill="#dfe6ee" stroke="#8a99a8" /><rect x="4" y="4" width="22" height="11" fill="#b8d4ee" stroke="#5a86b0" /><path d="M6 20h4M12 20h4M18 20h6M6 26h4M12 26h4M18 26h6M6 32h4M12 32h4M6 38h4M12 38h4" stroke="#8fa0b0" strokeWidth="3" /><rect x="20" y="28" width="4" height="12" fill="#e08a20" /></svg>
      </TaskBtn>
      <Gap w={22} />
      <TaskBtn w={68} active>
        <svg width="40" height="36" viewBox="0 0 40 36"><path d="M8 10c0-6 10-9 18-9l6 5 1 14c1 3 4 8 5 10l-7-6-6 2C14 30 8 22 8 10z" fill="#6b6660" /><ellipse cx="5" cy="17" rx="5" ry="5" fill="#222" /><ellipse cx="17" cy="19" rx="6" ry="7" fill="#ddd" /><circle cx="16" cy="19" r="3" fill="#111" /><path d="M20 23l14 9" stroke="#c47a26" strokeWidth="2" /></svg>
      </TaskBtn>
      <Gap w={17} />
      <TaskBtn w={40}>
        <svg width="40" height="44" viewBox="0 0 40 44"><rect x="18" y="1" width="16" height="14" fill="#0000d8" stroke="#222" strokeWidth="1.6" /><rect x="15" y="17" width="24" height="5" fill="#ddd" stroke="#222" /><rect x="2" y="28" width="16" height="12" fill="#0000d8" stroke="#222" strokeWidth="1.6" /><rect x="0" y="38" width="24" height="5" fill="#ddd" stroke="#222" /><path d="M24 12 12 26l7-1-4 9 13-14-7 1z" fill="#ffee00" stroke="#222" strokeWidth=".5" /></svg>
      </TaskBtn>
      <Gap w={16} />
      <TaskBtn w={67} active>
        <svg width="40" height="40" viewBox="0 0 40 40"><path d="M1 6h16l3 3h18v28H1z" fill="#f0d47e" /><path d="M5 4h10v5H5zM18 3h10v5H18z" fill="#fff" /><rect x="8" y="26" width="28" height="13" fill="#7fc0e0" /><rect x="15" y="30" width="13" height="4" fill="#f0d47e" /></svg>
      </TaskBtn>
      <Gap w={17} />
      <TaskBtn w={38}>
        <svg width="36" height="32" viewBox="0 0 36 32"><path d="M8 1h28l-8 30H0z" fill="#2a7fc4" /><path d="M9 9l9 7-11 8M14 24h9" stroke="#fff" strokeWidth="2.4" fill="none" /></svg>
      </TaskBtn>
      <Gap w={32} />
      <TaskBtn w={40}>
        <div className="relative w-[38px] h-[30px] mb-[6px] rounded-[4px] bg-[#c02035] flex items-center justify-center text-white font-bold text-[22px]">S<span className="absolute -bottom-[6px] left-[24px] w-0 h-0 border-l-[6px] border-t-[7px] border-l-transparent border-t-[#c02035]" /></div>
      </TaskBtn>
      <Gap w={30} />
      <TaskBtn w={40}>
        <div className="w-[40px] h-[44px] bg-[#eef2f6] border border-white flex items-center justify-center">
          <svg width="32" height="28" viewBox="0 0 32 28"><path d="M2 26C2 12 14 2 22 3l2-3 3 5c2 3 4 6 3 10-3-4-6-5-9-5-5 0-10 6-12 10l-2-1z" fill="#173a63" /></svg>
        </div>
      </TaskBtn>
      <Gap w={16} />
      <TaskBtn w={67} active>
        <svg width="36" height="36" viewBox="0 0 36 36"><circle cx="18" cy="18" r="17" fill="#dfdfe4" stroke="#8a8a95" strokeWidth="2" /><text x="9" y="28" fontSize="28" fontWeight="bold" fill="#f08012" fontFamily="Noto Sans">S</text></svg>
      </TaskBtn>
      <div className="flex-1" />
      <div className="h-[46px] flex items-center text-[#e8e8e8] text-[14px] shrink-0">
        <span className="relative top-[1px]">Desktop</span>
        <span className="ml-[14px] -mt-[16px] text-[13px]">»</span>
        <span className="ml-[11px] -mt-[4px]">DE</span>
        <TrayIcons />
        <div className="ml-[20px] w-[72px] flex flex-col items-center leading-[21px]">
          <span>16:29</span>
          <span className="whitespace-nowrap">09.09.2015</span>
        </div>
        <div className="ml-[14px] mr-0 w-[14px] h-[46px] border border-[#9ba28c] bg-gradient-to-b from-[#8d9480] to-[#666c58]" />
      </div>
    </div>
  );
}

const cal = [
  ["31","1","2","3","4","5","6"],
  ["7","8","9","10","11","12","13"],
  ["14","15","16","17","18","19","20"],
  ["21","22","23","24","25","26","27"],
  ["28","29","30","1","2","3","4"],
];

function Calendar() {
  return (
    <div className="absolute left-[3634px] top-[6px] w-[180px] h-[151px] bg-gradient-to-br from-[#2a2e38] to-[#15171c] border border-[#3c4450] font-['Liberation_Sans',sans-serif] text-[#c4c9d1] text-[14px]">
      <div className="flex items-center justify-between h-[20px] mt-[6px] px-[12px]">
        <svg width="9" height="10" viewBox="0 0 9 10"><path d="M9 0v10L0 5z" fill="#4a5058" /></svg>
        <span className="tracking-[0.5px]">September</span>
        <svg width="9" height="10" viewBox="0 0 9 10"><path d="M0 0v10l9-5z" fill="#4a5058" /></svg>
      </div>
      <div className="grid grid-cols-[16px_repeat(7,1fr)] pr-[2px] -mt-[2px] h-[17px] items-center text-right text-[#3e444e]">
        <span />
        {["Mo","Di","Mi","Do","Fr","Sa","So"].map((d) => <span key={d} className="pr-[2px]">{d}</span>)}
      </div>
      {cal.map((row, r) => (
        <div key={r} className="grid grid-cols-[16px_repeat(7,1fr)] pr-[2px] h-[20px] items-center text-right">
          <span className="text-[10px] text-[#404650] text-left pl-[3px]">{36 + r}</span>
          {row.map((d, i) => {
            const dim = (r === 0 && i === 0) || (r === 4 && i > 2);
            const today = r === 1 && i === 2;
            return (
              <span key={i} className={`h-[20px] leading-[20px] pr-[2px] ${dim ? "text-[#5c6674]" : ""} ${today ? "bg-[#b96f00] border border-[#8c8c8c] leading-[18px] text-white" : ""}`}>{d}</span>
            );
          })}
        </div>
      ))}
    </div>
  );
}

function Notice() {
  return (
    <div className="absolute left-[3555px] top-[318px] flex items-start gap-[6px] font-['DejaVu_Sans',sans-serif] text-[13.4px] leading-[19px] text-[#fbe6fb] [-webkit-text-stroke:0.5px_#ff20ff]">
      <div className="w-[20px] h-[20px] rounded-[4px] bg-[#e040d0] flex items-center justify-center shrink-0"><InfoDot s={18} /></div>
      <div className="whitespace-nowrap pt-px">Die Verbindung mit dem<br />Dienst kann nicht<br />hergestellt werden.</div>
    </div>
  );
}

export default function App() {
  return (
    <div className="relative w-[3840px] h-[1080px] overflow-hidden bg-[#c4dd97]">
      <MainWindow />
      <ComposeWindow />
      <Taskbar />
      <Calendar />
      <Notice />
    </div>
  );
}
